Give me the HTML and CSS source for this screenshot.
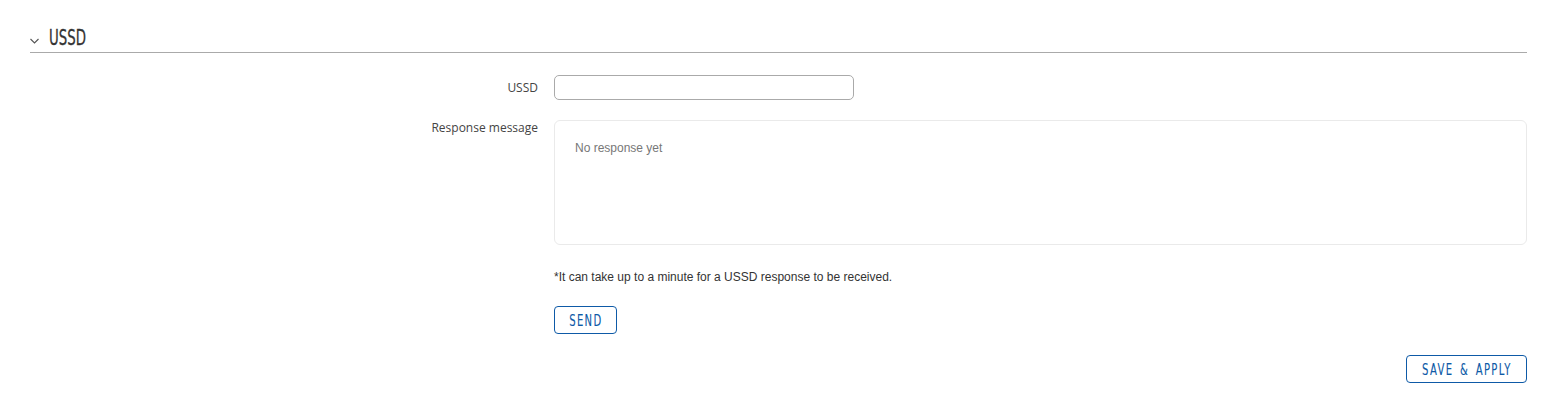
FILE: index.html
```html
<!DOCTYPE html>
<html lang="en">
  <head>
    <meta charset="UTF-8" />
    <title>USSD</title>
    <link rel="stylesheet" href="styles.css">
  </head>
  <body>
    <div class="section">
      <div class="section-title">
        <svg class="chevron" width="9" height="6" viewBox="0 0 9 6">
          <path d="M0.5 1 L4.5 5 L8.5 1" fill="none" stroke="#555" stroke-width="1.1" />
        </svg>
        <span class="title-text">USSD</span>
      </div>

      <div class="row first">
        <label class="label">USSD</label>
        <div class="field"><input class="input" type="text" /></div>
      </div>

      <div class="row resp-row">
        <label class="label resp">Response message</label>
        <div class="field">
          <div class="response">No response yet</div>
        </div>
      </div>

      <div class="row note-row">
        <div class="label"></div>
        <div class="field note">*It can take up to a minute for a USSD response to be received.</div>
      </div>

      <div class="row send-row">
        <div class="label"></div>
        <div class="field"><button class="btn send"><span>SEND</span></button></div>
      </div>

      <div class="footer">
        <button class="btn apply"><span>SAVE &amp; APPLY</span></button>
      </div>
    </div>
  </body>
</html>
```

FILE: styles.css
```css
body {
  margin: 0;
  background: #fff;
  font-family: "Open Sans", Arial, sans-serif;
  color: #333;
}

.section {
  padding: 25px 21px 0 30px;
}

.section-title {
  display: flex;
  align-items: center;
  gap: 10px;
  height: 26px;
  border-bottom: 1px solid #aaa;
  color: #333;
  padding-bottom: 1px;
}

.section-title .chevron {
  margin-top: 6px;
}

.title-text {
  display: inline-block;
  font-family: "DejaVu Sans", sans-serif;
  font-size: 20.5px;
  -webkit-text-stroke: 0.3px #333;
  transform: scaleX(0.65);
  transform-origin: left center;
}

.row {
  display: flex;
}

.row.first {
  margin-top: 22px;
}

.row.resp-row {
  margin-top: 20px;
}

.row.note-row {
  margin-top: 24px;
}

.row.send-row {
  margin-top: 21px;
}

.label {
  width: 508px;
  text-align: right;
  padding-right: 16px;
  font-size: 12px;
  color: #444;
  line-height: 25px;
  flex-shrink: 0;
}

.label.resp {
  line-height: 16px;
}

.field {
  flex: 1;
}

.input {
  display: block;
  box-sizing: border-box;
  width: 300px;
  height: 25px;
  border: 1px solid #aaa;
  border-radius: 5px;
  margin: 0;
  padding: 0 8px;
}

.response {
  box-sizing: border-box;
  height: 125px;
  border: 1px solid #eaeaea;
  border-radius: 6px;
  padding: 20px 20px;
  font-family: Arial, "Liberation Sans", sans-serif;
  font-size: 12px;
  color: #777;
}

.note {
  font-family: Arial, "Liberation Sans", sans-serif;
  font-size: 12px;
  color: #333;
  line-height: 16px;
}

.btn {
  box-sizing: border-box;
  display: flex;
  align-items: center;
  justify-content: center;
  height: 28px;
  background: #fff;
  border: 1px solid #0e5aa7;
  border-radius: 4px;
  color: #0e5aa7;
  cursor: pointer;
  padding: 0;
  overflow: hidden;
}

.btn span {
  display: inline-block;
  font-family: "DejaVu Sans", sans-serif;
  font-size: 15px;
  letter-spacing: 2px;
  word-spacing: 3px;
  white-space: nowrap;
  -webkit-text-stroke: 0.1px #0e5aa7;
  transform: scaleX(0.67);
  margin-top: 1px;
}

.btn.send {
  width: 63px;
}

.btn.apply {
  width: 121px;
}

.footer {
  display: flex;
  justify-content: flex-end;
  margin-top: 21px;
}
```
